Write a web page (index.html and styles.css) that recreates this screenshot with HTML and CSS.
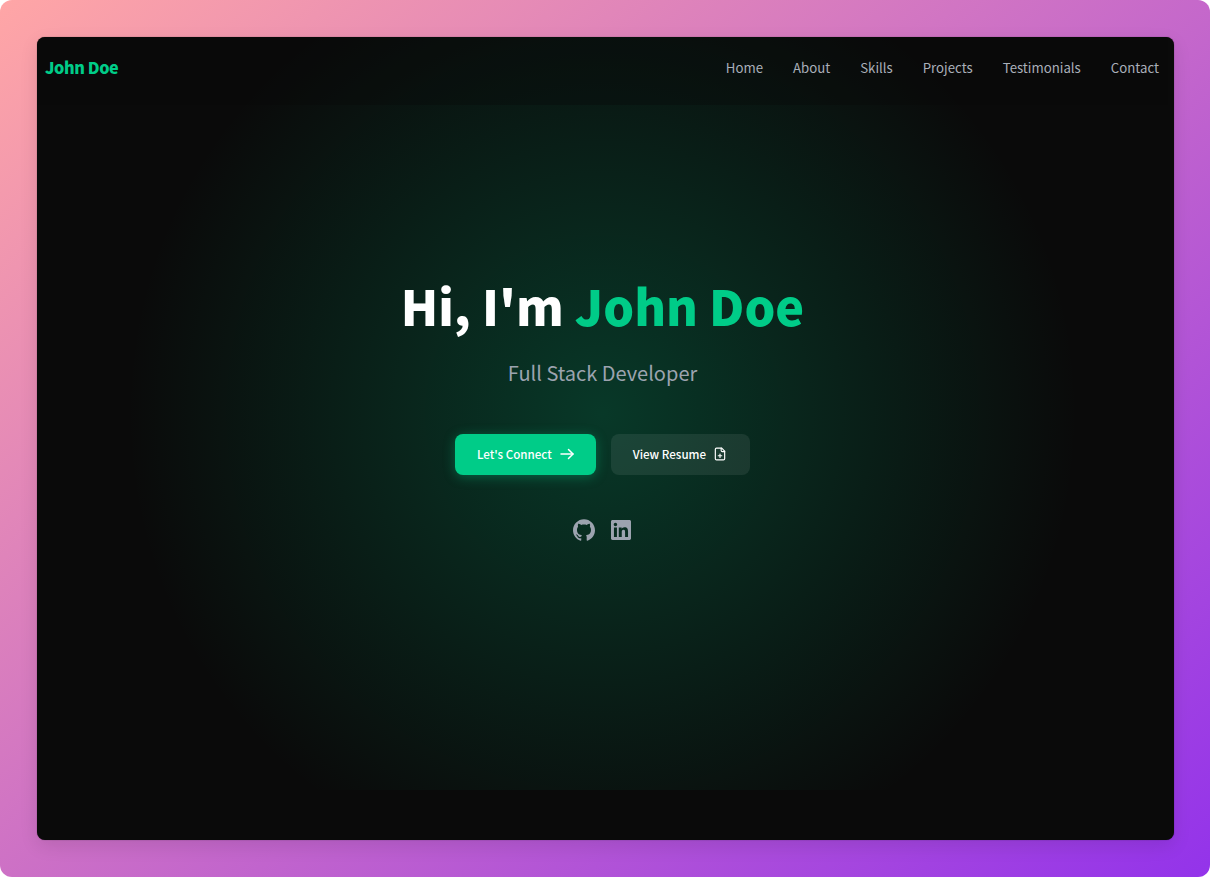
FILE: index.html
```html
<!DOCTYPE html>
<html lang="en">
<head>
<meta charset="utf-8">
<title>John Doe</title>
<link rel="stylesheet" href="styles.css">
</head>
<body>
<div class="frame">
  <div class="window">
    <nav class="nav">
      <a class="logo">John Doe</a>
      <div class="links">
        <a>Home</a><a>About</a><a>Skills</a><a>Projects</a><a>Testimonials</a><a>Contact</a>
      </div>
    </nav>
    <section class="hero">
      <h1 class="title">Hi, I'm <span class="accent">John Doe</span></h1>
      <p class="role">Full Stack Developer</p>
      <div class="actions">
        <a class="btn primary">Let's Connect
          <svg class="ico-arrow" viewBox="0 0 24 24" fill="none" stroke="currentColor" stroke-width="2" stroke-linecap="round" stroke-linejoin="round"><path d="M4 12h16"/><path d="m14 6 6 6-6 6"/></svg>
        </a>
        <a class="btn secondary">View Resume
          <svg class="ico-file" viewBox="0 0 24 24" fill="none" stroke="currentColor" stroke-width="2" stroke-linecap="round" stroke-linejoin="round"><path d="M15 2H6a2 2 0 0 0-2 2v16a2 2 0 0 0 2 2h12a2 2 0 0 0 2-2V7Z"/><path d="M14 2v4a2 2 0 0 0 2 2h4"/><path d="M9 15h6"/><path d="M12 18v-6"/></svg>
        </a>
      </div>
      <div class="social">
        <svg class="ico-gh" viewBox="0 0 24 24" fill="currentColor"><path d="M12 .297c-6.63 0-12 5.373-12 12 0 5.303 3.438 9.8 8.205 11.385.6.113.82-.258.82-.577 0-.285-.01-1.04-.015-2.04-3.338.724-4.042-1.61-4.042-1.61C4.422 18.07 3.633 17.7 3.633 17.7c-1.087-.744.084-.729.084-.729 1.205.084 1.838 1.236 1.838 1.236 1.07 1.835 2.809 1.305 3.495.998.108-.776.417-1.305.76-1.605-2.665-.3-5.466-1.332-5.466-5.93 0-1.31.465-2.38 1.235-3.22-.135-.303-.54-1.523.105-3.176 0 0 1.005-.322 3.3 1.23.96-.267 1.98-.399 3-.405 1.02.006 2.04.138 3 .405 2.28-1.552 3.285-1.23 3.285-1.23.645 1.653.24 2.873.12 3.176.765.84 1.23 1.91 1.23 3.22 0 4.61-2.805 5.625-5.475 5.92.42.36.81 1.096.81 2.22 0 1.606-.015 2.896-.015 3.286 0 .315.21.69.825.57C20.565 22.092 24 17.592 24 12.297c0-6.627-5.373-12-12-12"/></svg>
        <svg class="ico-in" viewBox="0 0 24 24" fill="currentColor"><path d="M20.447 20.452h-3.554v-5.569c0-1.328-.027-3.037-1.852-3.037-1.853 0-2.136 1.445-2.136 2.939v5.667H9.351V9h3.414v1.561h.046c.477-.9 1.637-1.85 3.37-1.85 3.601 0 4.267 2.37 4.267 5.455v6.286zM5.337 7.433c-1.144 0-2.063-.926-2.063-2.065 0-1.138.92-2.063 2.063-2.063 1.14 0 2.064.925 2.064 2.063 0 1.139-.925 2.065-2.064 2.065zm1.782 13.019H3.555V9h3.564v11.452zM22.225 0H1.771C.792 0 0 .774 0 1.729v20.542C0 23.227.792 24 1.771 24h20.451C23.2 24 24 23.227 24 22.271V1.729C24 .774 23.2 0 22.222 0h.003z"/></svg>
      </div>
    </section>
  </div>
</div>
</body>
</html>
```
FILE: styles.css
```css
* { box-sizing: border-box; }
html, body { margin: 0; height: 100%; background: #fff; overflow: hidden; }
body { font-family: "Noto Sans CJK JP", "Noto Sans", sans-serif; }
.frame {
  height: 877px;
  padding: 37px 36px 37px 37px;
  border-radius: 12px;
  background: linear-gradient(140deg, #ffa6a6 0%, #9333ea 100%);
}
.window {
  position: relative;
  height: 803px;
  padding-right: 6px;
  border-radius: 8px;
  overflow: hidden;
  background: #0a0a0a;
  box-shadow: 0 6px 18px rgba(0, 0, 0, 0.1), 0 0 1px rgba(0, 0, 0, 0.6);
}
.nav {
  position: absolute;
  top: 0; left: 0; right: 6px;
  z-index: 2;
  height: 68px;
  padding: 0 9px 8px 8px;
  display: flex;
  align-items: center;
  justify-content: space-between;
  background: rgba(10, 10, 10, 0.35);
}
.logo { color: #00cc88; font-size: 16.2px; font-weight: 900; letter-spacing: -0.4px; }
.links { display: flex; gap: 30px; font-size: 13.23px; color: #a9afb9; }
.hero {
  height: 753px;
  padding-bottom: 11px;
  display: flex;
  flex-direction: column;
  align-items: center;
  justify-content: center;
  background: radial-gradient(circle at center, rgba(0, 204, 136, 0.24) 0%, rgba(0, 204, 136, 0) 70%);
}
.title { margin: 0; color: #fff; font-size: 48.5px; line-height: 60px; font-weight: 900; }
.accent { color: #00cc88; }
.role { margin: 24px 0 0; color: #9ca3af; font-size: 20px; line-height: 1.4; }
.actions { display: flex; gap: 15px; margin-top: 47px; }
.btn {
  height: 41px;
  padding: 0 22px 2px;
  display: flex;
  align-items: center;
  gap: 7px;
  border-radius: 8px;
  color: #fff;
  font-size: 11.6px;
  font-weight: 500;
}
.primary { padding-right: 20px; gap: 6px; background: #00cc88; box-shadow: 0 2px 12px rgba(0, 204, 136, 0.35); }
.secondary { padding-right: 23px; background: rgba(255, 255, 255, 0.08); }
.ico-arrow { width: 18px; height: 18px; }
.ico-file { width: 14px; height: 14px; }
.social { display: flex; gap: 16px; margin-top: 44px; padding-right: 2px; color: #9ca3af; }
.ico-gh { width: 22px; height: 22px; }
.ico-in { width: 20px; height: 20px; margin-top: 1px; }
```
